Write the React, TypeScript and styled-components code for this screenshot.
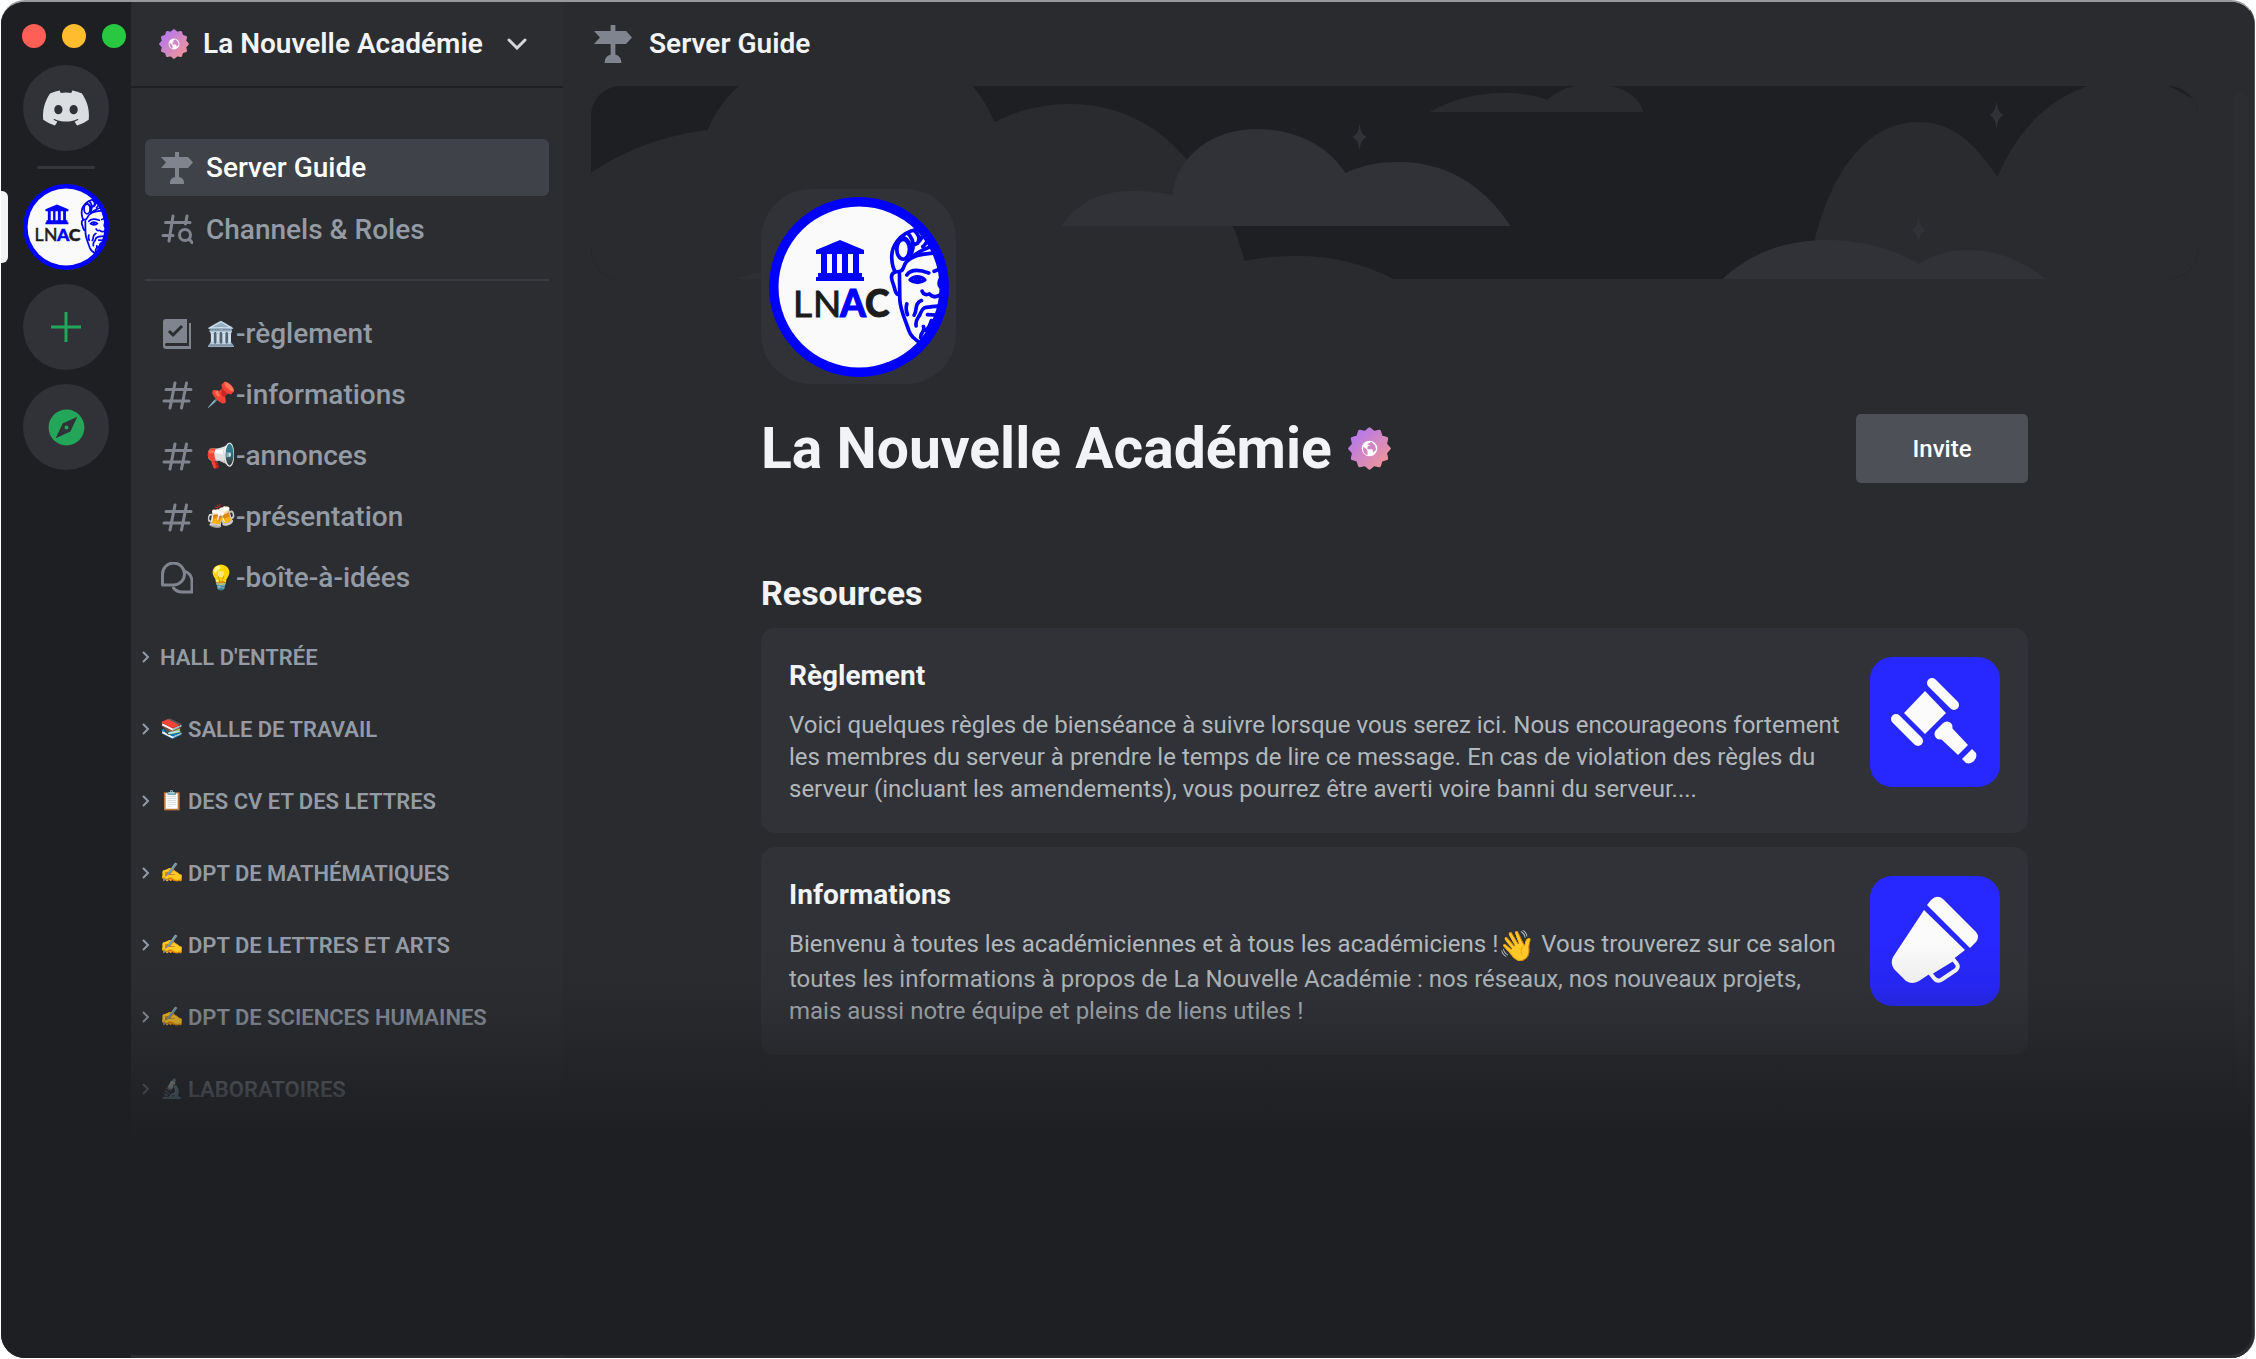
import React from 'react';
import styled, { createGlobalStyle } from 'styled-components';
import { FaDiscord } from 'react-icons/fa';
import { MdExplore } from 'react-icons/md';

const color = {
  rail: '#1e1f22',
  sidebar: '#2c2d31',
  main: '#2a2b2f',
  raised: '#313237',
  selected: '#404249',
  icon: '#80848e',
  muted: '#949ba4',
  body: '#b2b8bc',
  heading: '#f2f3f5',
  green: '#23a55a',
  brand: '#0000ff',
};

const GlobalStyle = createGlobalStyle`
  *, *::before, *::after { box-sizing: border-box; }
  body {
    margin: 0;
    background: #ffffff;
    font-family: Roboto, "Noto Sans", sans-serif;
    color: ${color.heading};
  }
  button { font: inherit; color: inherit; border: 0; padding: 0; background: none; cursor: pointer; }
  a { color: inherit; text-decoration: none; }
  h1, h2, h3, p, ul { margin: 0; padding: 0; }
  ul { list-style: none; }
  svg { display: block; flex: none; }
`;

/* ---------- window ---------- */

const Window = styled.div`
  position: relative;
  display: grid;
  grid-template-columns: 130px 432px minmax(0, 1fr);
  height: calc(100vh - 1px);
  margin: 0 1px;
  border-top: 2px solid #96989b;
  border-right: 1px solid #4c4e52;
  border-radius: 24px;
  overflow: hidden;
  background: ${color.rail};
`;

const BottomFade = styled.div`
  position: absolute;
  left: 130px;
  right: 2px;
  bottom: 3px;
  height: 412px;
  border-bottom-right-radius: 22px;
  pointer-events: none;
  background: linear-gradient(
    to bottom,
    rgba(30, 31, 34, 0) 0,
    rgba(30, 31, 34, 0.07) 44px,
    rgba(30, 31, 34, 0.18) 66px,
    rgba(30, 31, 34, 0.74) 150px,
    rgba(30, 31, 34, 1) 196px
  );
`;

/* ---------- server rail ---------- */

const Rail = styled.nav`
  display: flex;
  flex-direction: column;
  align-items: center;
  gap: 14px;
  padding-top: 22px;
  background: ${color.rail};
`;

const Lights = styled.div`
  display: flex;
  gap: 16px;
  align-self: flex-start;
  padding: 0 0 3px 21px;
`;

const Light = styled.button<{ $tone: string }>`
  width: 24px;
  height: 24px;
  border-radius: 50%;
  background: ${(p) => p.$tone};
`;

const RailSlot = styled.div`
  position: relative;
  display: flex;
  justify-content: center;
  width: 100%;
`;

const RailButton = styled.button`
  display: grid;
  place-items: center;
  width: 86px;
  height: 86px;
  border-radius: 50%;
  background: ${color.raised};
  color: ${color.green};
`;

const ActivePill = styled.span`
  position: absolute;
  left: 0;
  top: 7px;
  width: 7px;
  height: 72px;
  border-radius: 0 6px 6px 0;
  background: ${color.heading};
`;

const RailDivider = styled.div`
  width: 58px;
  height: 3px;
  margin: 1px 0;
  border-radius: 2px;
  background: #35363c;
`;

const DiscordMark = styled(FaDiscord)`
  width: 50px;
  height: 44px;
  color: #dbdee1;
`;

const Compass = styled(MdExplore)`
  width: 43px;
  height: 43px;
`;

/* ---------- sidebar ---------- */

const Sidebar = styled.aside`
  min-height: 0;
  overflow: hidden;
  background: ${color.sidebar};
`;

const ServerMenu = styled.button`
  display: flex;
  align-items: center;
  gap: 14px;
  width: 100%;
  height: 86px;
  padding: 0 28px;
  border-bottom: 2px solid #1f2024;
  font-size: 28px;
  font-weight: 600;
  line-height: 34px;
`;

const MenuChevron = styled.svg`
  width: 20px;
  height: 12px;
  margin-left: 10px;
`;

const NavGroup = styled.ul`
  display: flex;
  flex-direction: column;
  gap: 5px;
  margin: 0 14px;
`;

const GuideGroup = styled(NavGroup)`
  margin-top: 51px;
  padding-bottom: 21px;
  border-bottom: 2px solid #3b3d44;
`;

const ChannelGroup = styled(NavGroup)`
  margin-top: 25px;
`;

const NavLink = styled.a<{ $selected?: boolean }>`
  display: flex;
  align-items: center;
  gap: 13px;
  height: ${(p) => (p.$selected === undefined ? 56 : 57)}px;
  padding: 0 16px;
  border-radius: 6px;
  background: ${(p) => (p.$selected ? color.selected : 'transparent')};
  color: ${(p) => (p.$selected ? '#ffffff' : color.muted)};
  font-size: 28px;
  font-weight: 500;
  line-height: 34px;

  svg { color: ${color.icon}; }
`;

const ChannelName = styled.span`
  display: flex;
  align-items: center;
`;

const ChannelEmoji = styled.span`
  width: 30px;
  font-size: 24px;
  line-height: 28px;
`;

const CategoryList = styled.ul`
  display: flex;
  flex-direction: column;
  gap: 40px;
  margin: 35px 11px 0;
`;

const Category = styled.button`
  display: flex;
  align-items: center;
  height: 32px;
  color: ${color.muted};
  font-size: 22px;
  font-weight: 600;
  white-space: nowrap;
`;

const CategoryChevron = styled.svg`
  width: 8px;
  height: 12px;
  margin-right: 10px;
`;

const CategoryEmoji = styled.span`
  width: 28px;
  font-size: 19px;
  line-height: 24px;
  text-align: left;
`;

/* ---------- main ---------- */

const Main = styled.main`
  min-width: 0;
  min-height: 0;
  overflow: hidden;
  background: ${color.main};
`;

const TopBar = styled.header`
  display: flex;
  align-items: center;
  gap: 17px;
  height: 84px;
  padding-left: 31px;
  color: ${color.icon};
`;

const TopTitle = styled.h2`
  color: ${color.heading};
  font-size: 28px;
  font-weight: 600;
  line-height: 34px;
`;

const Scroller = styled.div`
  display: flex;
  height: 100%;
`;

const Page = styled.div`
  flex: 1;
  min-width: 0;
  padding: 0 36px 0 28px;
`;

const ScrollTrack = styled.div`
  width: 14px;
  margin: 6px 6px 0 0;
  border-radius: 7px;
  background: #2c2d31;
`;

const Banner = styled.svg`
  width: 100%;
  height: 193px;
  border-radius: 30px;
`;

const Column = styled.div`
  position: relative;
  display: flex;
  flex-direction: column;
  width: 100%;
  max-width: 1267px;
  margin: -90px auto 0;
`;

const Avatar = styled.div`
  display: grid;
  place-items: center;
  width: 195px;
  height: 195px;
  border-radius: 50px;
  background: ${color.raised};
`;

const TitleRow = styled.div`
  display: flex;
  align-items: center;
  gap: 16px;
  margin-top: 30px;
`;

const Title = styled.h1`
  font-size: 57px;
  font-weight: 700;
  line-height: 69px;
`;

const InviteButton = styled.button`
  width: 172px;
  height: 69px;
  margin-left: auto;
  border-radius: 5px;
  background: #4e5058;
  color: #ffffff;
  font-size: 24px;
  font-weight: 500;
`;

const SectionTitle = styled.h2`
  margin-top: 90px;
  font-size: 34px;
  font-weight: 700;
  line-height: 40px;
`;

const CardList = styled.div`
  display: flex;
  flex-direction: column;
  gap: 14px;
  margin-top: 15px;
`;

const Card = styled.article`
  display: flex;
  justify-content: space-between;
  padding: 29px 28px 28px;
  border-radius: 14px;
  background: ${color.raised};
`;

const CardCopy = styled.div`
  padding-top: 2px;
`;

const CardTitle = styled.h3`
  font-size: 28px;
  font-weight: 700;
  line-height: 34px;
`;

const CardText = styled.p`
  margin-top: 16px;
  color: ${color.body};
  font-size: 24px;
  line-height: 32px;
  white-space: nowrap;
`;

const Wave = styled.span`
  font-size: 30px;
  line-height: 34px;
  vertical-align: middle;
`;

const Thumb = styled.svg`
  width: 130px;
  height: 130px;
  border-radius: 22px;
  background: #2727ff;
  fill: #fbfbfb;
`;

/* ---------- drawings ---------- */

function Signpost({ size }: { size: number }) {
  return (
    <svg width={size} height={size} viewBox="0 0 32 32" fill="currentColor" aria-hidden="true">
      <path d="M14 0h4v5h9l5 5.500-5 5.500h-9v9a6 6 0 0 1 5 6v1H9v-1a6 6 0 0 1 5-6v-9H0l5-5.500L0 5h14z" />
    </svg>
  );
}

const Stroke = styled.svg`
  width: 32px;
  height: 32px;
  fill: none;
  stroke: currentColor;
  stroke-width: 3;
  stroke-linecap: round;
  stroke-linejoin: round;
`;

const HashIcon = () => (
  <Stroke viewBox="0 0 32 32" aria-hidden="true">
    <path d="M14 4 9 29M25.500 4 20.500 29M5 10.500h25M3 22h25" />
  </Stroke>
);

const HashSearchIcon = () => (
  <Stroke viewBox="0 0 32 32" aria-hidden="true">
    <path d="M12 2 8 27M26 2l-1.500 8M4.500 8.500H29M2 21.500h10" />
    <circle cx="24" cy="21" r="5.500" />
    <path d="m28.500 25.500 2.500 3" />
  </Stroke>
);

const RulesIcon = () => (
  <svg width="32" height="32" viewBox="0 0 32 32" fill="currentColor" aria-hidden="true">
    <path d="M5 1h21v24H5.500a1.500 1.500 0 0 0 0 3H28V5h2v26H5a3 3 0 0 1-3-3V4a3 3 0 0 1 3-3z" />
    <path d="m8 13 4 4 9-9" fill="none" stroke={color.sidebar} strokeWidth="3" />
  </svg>
);

const ForumIcon = () => (
  <Stroke viewBox="0 0 32 32" aria-hidden="true">
    <path d="M1.500 23V12a11 11 0 1 1 11 11z" />
    <path d="M24.500 9.500A11 11 0 0 1 31 19.500V30H21a11 11 0 0 1-8.500-4" />
  </Stroke>
);

function VerifiedBadge({ size, id }: { size: number; id: string }) {
  const points = Array.from({ length: 24 }, (_, i) => {
    const r = i % 2 ? 12.2 : 14.6;
    const a = (i * Math.PI) / 12;
    return `${(16 + r * Math.cos(a)).toFixed(2)},${(16 + r * Math.sin(a)).toFixed(2)}`;
  }).join(' ');
  return (
    <svg width={size} height={size} viewBox="0 0 32 32" aria-hidden="true">
      <linearGradient id={id} x1="0" y1="0" x2="1" y2="1">
        <stop offset="0.100" stopColor="#b478ee" />
        <stop offset="0.900" stopColor="#ee959a" />
      </linearGradient>
      <polygon points={points} fill={`url(#${id})`} stroke={`url(#${id})`} strokeWidth="2.500" strokeLinejoin="round" />
      <circle cx="16" cy="16" r="5.800" fill="#fff" />
      <path d="M11.500 14.500l3 3v3.500c-2-.5-4-3-3-6.500zM14 13l3.500-2 2.500 2.500 1 3-2 2.500-1-2.500h-3.500v-2l2-1z" fill="#cf86c4" />
    </svg>
  );
}

function LnacLogo({ size, id }: { size: number; id: string }) {
  return (
    <svg width={size} height={size} viewBox="0 0 180 180" role="img" aria-label="LNAC">
      <clipPath id={id}>
        <circle cx="90" cy="90" r="82" />
      </clipPath>
      <circle cx="90" cy="90" r="90" fill={color.brand} />
      <circle cx="90" cy="90" r="80.500" fill="#fafafa" />
      <path
        fill={color.brand}
        d="M71 43 95 53v4h-5v19h3v4h2v4H47v-4h2v-4h3V57h-5v-4zM58 57v19h5V57zM68 57v19h5V57zM79 57v19h5V57z"
        fillRule="evenodd"
      />
      <g fontFamily="Lato, sans-serif" fontSize="37" fill="#1c1c1c">
        <text x="24" y="120" stroke="#1c1c1c">L</text>
        <text x="44" y="120" stroke="#1c1c1c">N</text>
        <text x="71" y="120" fontWeight="900" fill={color.brand} stroke={color.brand}>A</text>
        <text x="96" y="120" fontWeight="900" stroke="#1c1c1c">C</text>
      </g>
      <g clipPath={`url(#${id})`}>
        <g
          transform="translate(-28.700 -26.300) scale(0.333)"
          fill="none"
          stroke={color.brand}
          strokeWidth="11"
          strokeLinecap="round"
          strokeLinejoin="round"
        >
          <path d="M530 176C475 188 452 230 455 265c1 20 5 30 10 38" />
          <ellipse cx="489" cy="236" rx="19" ry="30" />
          <path d="M482 203c18-6 36 22 30 52M503 187c14 16 22 34 12 58M523 180c14 10 16 26 10 38M548 192c-4 16-14 26-28 32M566 204c-8 14-12 20-18 24" />
          <path d="M465 303c14 2 22-3 25-12 8-30 40-40 95-44M512 262c16-16 34-24 60-34" />
          <path d="M465 303c-18 10-10 26-4 42 4 16 6 28 18 28M478 310l1 78c2 34 18 62 27 92 6 18 18 28 36 38" />
          <path d="M500 313c14-20 44-14 66-6M582 302l20-8" />
          <path d="M510 328c12-12 32-12 44 0-12 10-32 10-44 0z" />
          <circle cx="532" cy="326" r="5" />
          <path d="M602 322c-8 14-6 20-2 26M546 362c4 10 12 12 22 8 10 12 22 10 34 2" />
          <path d="M544 390c-22 8-12 30-22 44M500 400c-4 14-2 22 2 32M528 466c-4-22 10-24 14-40 8-22 24-14 34-18l28-2M562 432l36 2M550 468c6 18-10 14-8 34M574 450c-4 16-10 24-16 30" />
        </g>
      </g>
    </svg>
  );
}

const STAR = 'c1 8 2 11 7 14-5 3-6 6-7 14-1-8-2-11-7-14 5-3 6-6 7-14z';

function CloudBanner() {
  return (
    <Banner viewBox="0 0 1608 193" preserveAspectRatio="xMidYMid slice" aria-hidden="true">
      <rect width="1608" height="193" fill={color.rail} />
      <g fill={color.main}>
        <path d="M0 87C32 65 74 49 117 44 124 28 134 13 148 0H382C391 11 399 23 404 36 428 24 453 18 480 18 528 18 570 40 598 76 622 96 644 134 654 175 670 171 690 170 708 170 742 170 774 178 803 193H0z" />
        <path d="M839 26C862 13 886 7 913 7 930 7 944 9 957 14 963 8 972 3 983 0H1021C1038 4 1049 13 1053 26z" />
        <path d="M1224 155C1240 90 1274 36 1328 36 1364 36 1386 60 1407 91 1424 50 1454 14 1498 0H1579L1608 16V193H1224z" />
      </g>
      <g fill={color.raised}>
        <path d="M471 140C488 116 510 105 541 105 556 105 570 106 582 109 586 70 622 43 666 43 706 43 738 60 755 87 772 79 788 76 809 76 856 76 894 100 920 140z" />
        <path d="M1132 193C1160 167 1195 154 1237 154 1272 154 1304 163 1328 178 1342 169 1358 164 1377 164 1406 164 1432 174 1455 193z" />
        <path d="M146 193C160 187 180 184 200 184V193z" opacity="0.500" />
        <path d={`M769 37${STAR}`} />
        <path d={`M1406 15${STAR}`} />
        <path d={`M1328 130${STAR}`} />
      </g>
    </Banner>
  );
}

const GavelThumb = () => (
  <Thumb viewBox="0 0 130 130" aria-hidden="true">
    <path d="M55 34 76 56 55 77 34 56z" />
    <path d="M62 26 84 48M26 62 48 84" stroke="#fbfbfb" strokeWidth="10" strokeLinecap="round" />
    <path d="M77 70 70 77" stroke="#fbfbfb" strokeWidth="11" strokeLinecap="round" />
    <path d="M82 71 98 88 88 98 71 82zM102 92 106 96A8 8 0 0 1 96 106L92 102z" />
  </Thumb>
);

const MegaphoneThumb = () => (
  <Thumb viewBox="0 0 130 130" aria-hidden="true">
    <path d="M57 29 61 24Q67 18 73 23L106 56Q110 61 106 66L100 72z" />
    <path d="M54 34 95 74 86 81 58 99 49 105Q42 109 36 105L24 93Q20 87 23 81z" />
    <path
      d="M60 97 64 102Q67 106 71 104L86 94Q89 91 87 88L83 83z"
      fill="#2727ff"
      stroke="#fbfbfb"
      strokeWidth="4"
      strokeLinejoin="round"
    />
  </Thumb>
);

/* ---------- data ---------- */

const channels = [
  { emoji: '🏛️', name: 'règlement', Icon: RulesIcon },
  { emoji: '📌', name: 'informations', Icon: HashIcon },
  { emoji: '📢', name: 'annonces', Icon: HashIcon },
  { emoji: '🍻', name: 'présentation', Icon: HashIcon },
  { emoji: '💡', name: 'boîte-à-idées', Icon: ForumIcon },
];

const categories = [
  { emoji: '', name: "HALL D'ENTRÉE" },
  { emoji: '📚', name: 'SALLE DE TRAVAIL' },
  { emoji: '📋', name: 'DES CV ET DES LETTRES' },
  { emoji: '✍️', name: 'DPT DE MATHÉMATIQUES' },
  { emoji: '✍️', name: 'DPT DE LETTRES ET ARTS' },
  { emoji: '✍️', name: 'DPT DE SCIENCES HUMAINES' },
  { emoji: '🔬', name: 'LABORATOIRES' },
];

export default function App() {
  return (
    <>
      <GlobalStyle />
      <Window>
        <Rail aria-label="Servers">
          <Lights>
            <Light $tone="#ff5f57" aria-label="Close" />
            <Light $tone="#febc2e" aria-label="Minimize" />
            <Light $tone="#28c840" aria-label="Zoom" />
          </Lights>
          <RailButton aria-label="Direct Messages">
            <DiscordMark />
          </RailButton>
          <RailDivider />
          <RailSlot>
            <ActivePill />
            <RailButton aria-label="La Nouvelle Académie">
              <LnacLogo size={86} id="face-rail" />
            </RailButton>
          </RailSlot>
          <RailButton aria-label="Add a Server">
            <svg width="30" height="30" viewBox="0 0 30 30" fill="currentColor" aria-hidden="true">
              <path d="M13.500 0h3v13.500H30v3H16.500V30h-3V16.500H0v-3h13.500z" />
            </svg>
          </RailButton>
          <RailButton aria-label="Explore">
            <Compass />
          </RailButton>
        </Rail>

        <Sidebar>
          <ServerMenu>
            <VerifiedBadge size={30} id="badge-menu" />
            La Nouvelle Académie
            <MenuChevron viewBox="0 0 20 12" fill="none" stroke="#d5d7da" strokeWidth="3" strokeLinecap="round" aria-hidden="true">
              <path d="m2 2 8 8 8-8" />
            </MenuChevron>
          </ServerMenu>
          <GuideGroup>
            <li>
              <NavLink href="#guide" $selected>
                <Signpost size={32} />
                Server Guide
              </NavLink>
            </li>
            <li>
              <NavLink href="#roles" $selected={false}>
                <HashSearchIcon />
                Channels &amp; Roles
              </NavLink>
            </li>
          </GuideGroup>
          <ChannelGroup>
            {channels.map(({ emoji, name, Icon }) => (
              <li key={name}>
                <NavLink href={`#${name}`}>
                  <Icon />
                  <ChannelName>
                    <ChannelEmoji>{emoji}</ChannelEmoji>-{name}
                  </ChannelName>
                </NavLink>
              </li>
            ))}
          </ChannelGroup>
          <CategoryList>
            {categories.map(({ emoji, name }) => (
              <li key={name}>
                <Category>
                  <CategoryChevron viewBox="0 0 8 12" fill="none" stroke="currentColor" strokeWidth="2" aria-hidden="true">
                    <path d="m1 1 5 5-5 5" />
                  </CategoryChevron>
                  {emoji && <CategoryEmoji>{emoji}</CategoryEmoji>}
                  {name}
                </Category>
              </li>
            ))}
          </CategoryList>
        </Sidebar>

        <Main>
          <TopBar>
            <Signpost size={38} />
            <TopTitle>Server Guide</TopTitle>
          </TopBar>
          <Scroller>
            <Page>
              <CloudBanner />
              <Column>
                <Avatar>
                  <LnacLogo size={180} id="face-avatar" />
                </Avatar>
                <TitleRow>
                  <Title>La Nouvelle Académie</Title>
                  <VerifiedBadge size={43} id="badge-title" />
                  <InviteButton>Invite</InviteButton>
                </TitleRow>
                <SectionTitle>Resources</SectionTitle>
                <CardList>
                  <Card>
                    <CardCopy>
                      <CardTitle>Règlement</CardTitle>
                      <CardText>
                        Voici quelques règles de bienséance à suivre lorsque vous serez ici. Nous encourageons fortement
                        <br />
                        les membres du serveur à prendre le temps de lire ce message. En cas de violation des règles du
                        <br />
                        serveur (incluant les amendements), vous pourrez être averti voire banni du serveur....
                      </CardText>
                    </CardCopy>
                    <GavelThumb />
                  </Card>
                  <Card>
                    <CardCopy>
                      <CardTitle>Informations</CardTitle>
                      <CardText>
                        Bienvenu à toutes les académiciennes et à tous les académiciens !<Wave>👋</Wave> Vous trouverez sur ce salon
                        <br />
                        toutes les informations à propos de La Nouvelle Académie : nos réseaux, nos nouveaux projets,
                        <br />
                        mais aussi notre équipe et pleins de liens utiles !
                      </CardText>
                    </CardCopy>
                    <MegaphoneThumb />
                  </Card>
                </CardList>
              </Column>
            </Page>
            <ScrollTrack />
          </Scroller>
        </Main>
        <BottomFade />
      </Window>
    </>
  );
}
